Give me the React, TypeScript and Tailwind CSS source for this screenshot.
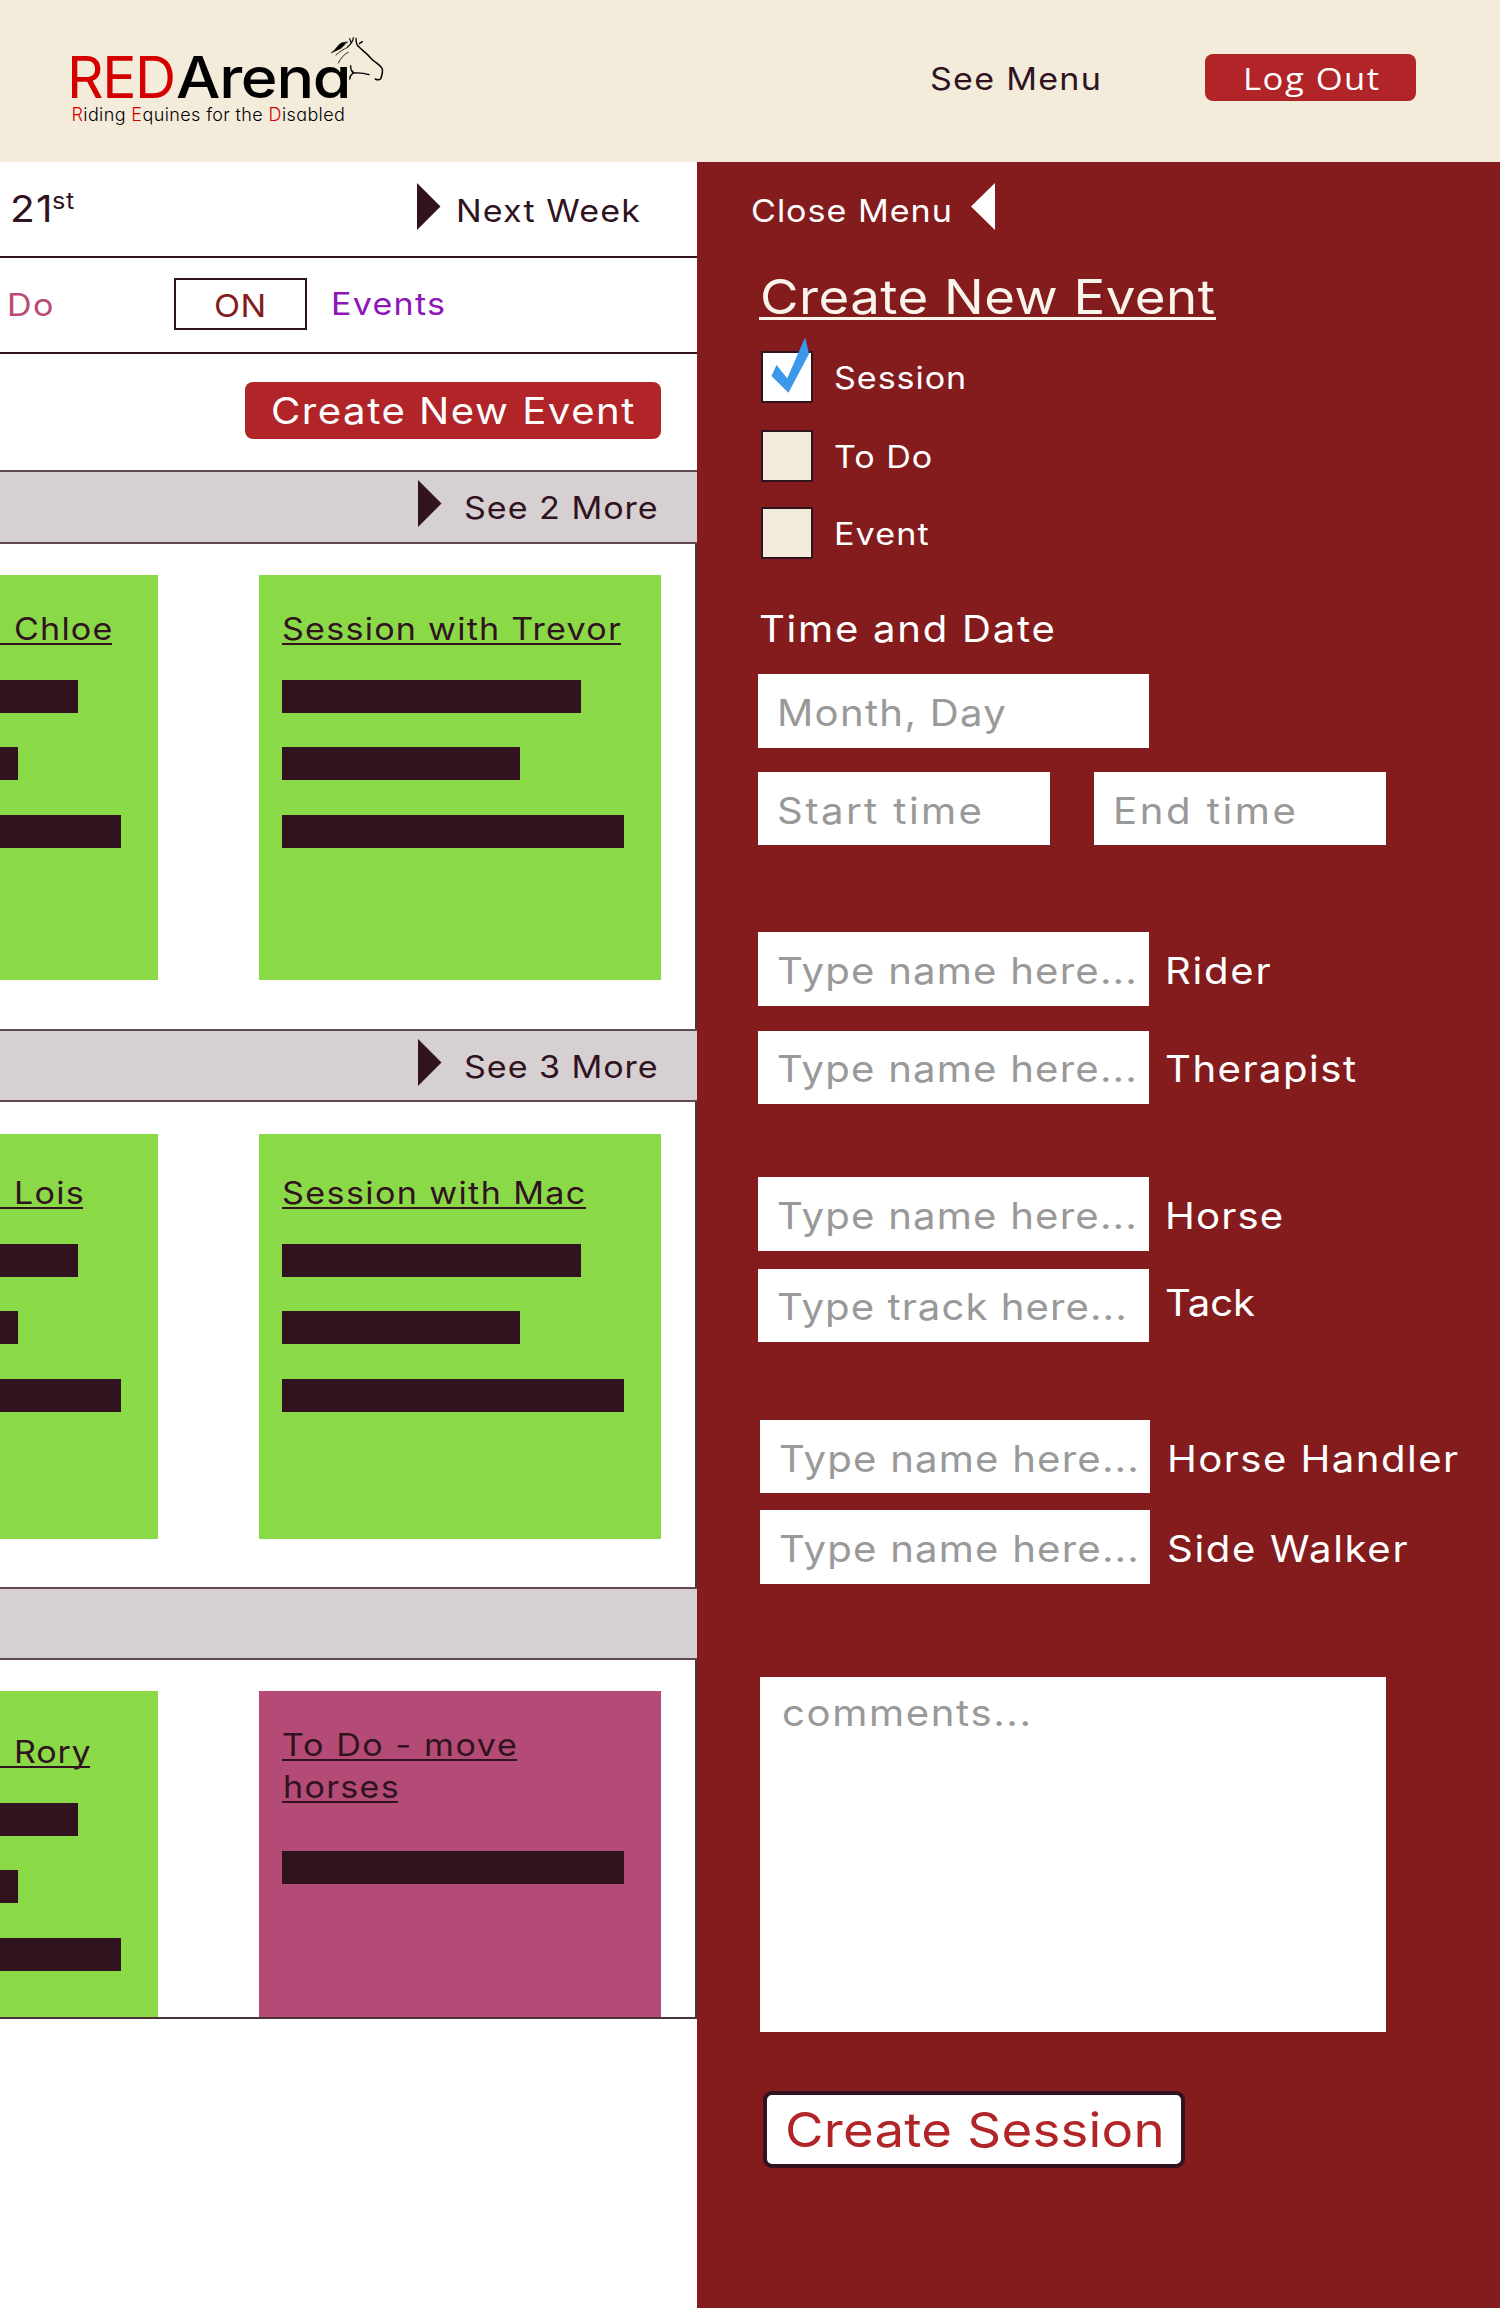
import type { ReactNode } from "react";

/* Slightly widened lettering used for every label in the interface. */
function T({ children, className = "" }: { children: ReactNode; className?: string }) {
  return <span className={`inline-block origin-left scale-x-110 ${className}`}>{children}</span>;
}

function RightArrow({ className }: { className: string }) {
  return (
    <svg viewBox="0 0 24 47" className={`h-[47px] w-6 shrink-0 fill-[#30131f] ${className}`}>
      <path d="M0 0 L23.5 23.5 L0 47 Z" />
    </svg>
  );
}

function Logo() {
  return (
    <div className="relative h-[162px] w-[930px] shrink-0 pl-[67px] pt-12 [font-feature-settings:'cv11']">
      <div className="flex text-[57px] leading-[60px]">
        <span className="w-[109px] tracking-[-1.47px] text-[#d40000]">RED</span>
        <T className="font-medium tracking-[-1.2px] text-black">Arena</T>
      </div>
      <div className="-mt-[3px] pl-[4.5px] text-[18px] font-light leading-5 tracking-[0.38px] text-black">
        <span className="text-[#d40000]">R</span>iding <span className="text-[#d40000]">E</span>quines for the{" "}
        <span className="text-[#d40000]">D</span>isabled
      </div>
      <svg
        viewBox="840 45 165 140"
        className="absolute left-[330px] top-[35px] h-[46.7px] w-[55px] fill-none stroke-black"
        strokeWidth="4"
        strokeLinecap="round"
        strokeLinejoin="round"
      >
        <path d="M845 98 C858 90 862 74 876 68 L893 66 C884 70 880 84 864 89 C858 91 852 96 845 98 Z" fill="black" strokeWidth="2" />
        <path d="M899 56 L903 68 M893 80 C902 74 908 66 910 53" strokeWidth="3.5" />
        <path d="M918 55 C918 66 919 75 925 79 M928 71 L937 65" />
        <path d="M925 79 C935 90 948 96 962 114 C973 127 990 133 997 147 C999 158 995 168 992 176 C988 180 982 180 976 177" strokeWidth="4.5" />
        <path d="M957 164 C945 160 925 158 912 159 L904 151 M902 137 C902 150 905 155 910 159 C902 165 899 170 899 177" />
        <path d="M895 97 C882 102 872 115 865 129 M893 82 C880 87 868 96 858 105" strokeWidth="2.5" />
      </svg>
    </div>
  );
}

function Title({ children, className, textClass }: { children: ReactNode; className: string; textClass: string }) {
  return (
    <div className={`h-9 shrink-0 border-b-2 border-[#30131f] leading-10 ${className}`}>
      <T className={textClass}>{children}</T>
    </div>
  );
}

function Bar({ className }: { className: string }) {
  return <div className={`h-[33px] shrink-0 bg-[#30131f] ${className}`} />;
}

type CardProps = { name: string; nameClass: string; textClass: string; className: string };

function ClippedCard({ name, nameClass, textClass, className }: CardProps) {
  return (
    <div className={`flex w-[158px] shrink-0 flex-col bg-[#8ada48] ${className}`}>
      <Title className={nameClass} textClass={textClass}>{name}</Title>
      <div className="mt-[34.5px] flex flex-col gap-[34.6px]">
        <Bar className="w-[78px]" />
        <Bar className="w-[18px]" />
        <Bar className="w-[121px]" />
      </div>
    </div>
  );
}

function SessionCard({ name, nameClass, textClass, className }: CardProps) {
  return (
    <div className={`ml-[101px] flex w-[402px] shrink-0 flex-col bg-[#8ada48] pl-[23px] ${className}`}>
      <Title className={nameClass} textClass={textClass}>{name}</Title>
      <div className="mt-[34.5px] flex flex-col gap-[34.6px]">
        <Bar className="w-[299px]" />
        <Bar className="w-[238px]" />
        <Bar className="w-[342px]" />
      </div>
    </div>
  );
}

function DayHeader({ more, className }: { more?: ReactNode; className: string }) {
  return (
    <div className={`flex w-[697px] shrink-0 items-start border-y-2 border-[#5f4852] bg-[#d6d0d2] ${className}`}>
      {more && (
        <>
          <RightArrow className="ml-[418px] mt-2" />
          <span className="ml-[22px] mt-4 leading-10">{more}</span>
        </>
      )}
    </div>
  );
}

function CheckRow({ label, labelClass, checked, className }: { label: string; labelClass: string; checked?: boolean; className: string }) {
  return (
    <div className={`relative ml-16 flex h-[52px] shrink-0 items-start ${className}`}>
      <div className={`h-[52px] w-[52px] border-2 border-[#30131f] ${checked ? "bg-white" : "bg-[#f3ecdb]"}`} />
      {checked && (
        <svg viewBox="0 0 38 56" className="absolute left-[10px] top-[-14px] h-14 w-[38px] fill-[#3d98eb]">
          <path d="M34.2 0.3 L38 17 L17.4 55.7 L0.5 39 L5.5 28 L16.2 41.3 Z" />
        </svg>
      )}
      <T className={`ml-[21px] mt-[6.5px] text-[31px] leading-10 ${labelClass}`}>{label}</T>
    </div>
  );
}

function Field({ text, className, textClass }: { text: string; className: string; textClass: string }) {
  return (
    <div className={`shrink-0 bg-white pl-[19px] leading-10 text-[#999999] ${className}`}>
      <T className={textClass}>{text}</T>
    </div>
  );
}

export default function App() {
  return (
    <div className="flex h-[2308px] w-[1500px] flex-col overflow-hidden whitespace-nowrap bg-white font-['Inter',sans-serif] text-[31px] text-[#30131f]">
      <header className="flex h-[162px] shrink-0 items-start bg-[#f3ecdb]">
        <Logo />
        <div className="mt-[59px] w-[275px] shrink-0 leading-10">
          <T className="tracking-[1.12px]">See Menu</T>
        </div>
        <button className="mt-[54px] flex h-[47px] w-[211px] shrink-0 items-start rounded-lg bg-[#b12427] pl-[37.5px] pt-[3.5px] text-left font-['Open_Sans',sans-serif] text-[31.5px] leading-10 text-white">
          <T className="tracking-[1.35px]">Log Out</T>
        </button>
      </header>

      <main className="flex grow">
        <section className="flex w-[697px] shrink-0 flex-col">
          <div className="flex h-24 shrink-0 items-start border-b-2 border-[#30131f]">
            <div className="mt-[27px] flex w-[416.5px] shrink-0 items-start pl-[10px]">
              <div className="w-[41.5px] text-[37px] leading-10">
                <T className="tracking-[1px]">21</T>
              </div>
              <T className="text-[23px] leading-6 tracking-[0.6px]">st</T>
            </div>
            <RightArrow className="mt-[21px]" />
            <T className="ml-[15px] mt-[28.5px] leading-10 tracking-[1px]">Next Week</T>
          </div>

          <div className="flex h-24 shrink-0 items-start border-b-2 border-[#30131f]">
            <div className="mt-[26.5px] w-[174px] shrink-0 pl-[7px] leading-10 text-[#b84c78]">
              <T className="tracking-[1.27px]">Do</T>
            </div>
            <div className="mt-5 h-[52px] w-[133px] shrink-0 border-2 border-[#30131f] pl-[38px] pt-[5.5px] leading-10 text-[#841b1d]">
              <T className="tracking-[0.39px]">ON</T>
            </div>
            <T className="ml-[23.5px] mt-[26px] leading-10 tracking-[1.13px] text-[#8e16b8]">Events</T>
          </div>

          <div className="flex h-[116px] shrink-0 items-start">
            <div className="ml-[244.5px] mt-7 h-[57px] w-[416.5px] rounded-lg bg-[#b12427] pl-[26.5px] pt-[9px] text-[36.5px] leading-10 text-white">
              <T className="tracking-[1.37px]">Create New Event</T>
            </div>
          </div>

          <div className="flex h-[559px] w-[697px] shrink-0 flex-col border-r-2 border-[#4c303b]">
            <DayHeader className="h-[74px]" more={<T className="tracking-[0.88px]">See 2 More</T>} />
            <div className="mt-[31px] flex">
              <ClippedCard name="Chloe" nameClass="w-28 pl-[13.5px]" textClass="tracking-[1.05px]" className="h-[405px] pt-[34px]" />
              <SessionCard name="Session with Trevor" nameClass="w-[339px]" textClass="tracking-[1.12px]" className="h-[405px] pt-[34px]" />
            </div>
          </div>

          <div className="flex h-[558px] w-[697px] shrink-0 flex-col border-r-2 border-[#4c303b]">
            <DayHeader className="h-[73px]" more={<T className="tracking-[0.85px]">See 3 More</T>} />
            <div className="mt-8 flex">
              <ClippedCard name="Lois" nameClass="w-[83px] pl-[14px]" textClass="tracking-[1.16px]" className="h-[405px] pt-[39px]" />
              <SessionCard name="Session with Mac" nameClass="w-[304px]" textClass="tracking-[1.25px]" className="h-[405px] pt-[39px]" />
            </div>
          </div>

          <div className="flex h-[432px] w-[697px] shrink-0 flex-col border-b-2 border-r-2 border-[#4c303b]">
            <DayHeader className="h-[73px]" />
            <div className="mt-[31px] flex">
              <ClippedCard name="Rory" nameClass="w-[90px] pl-[14px]" textClass="tracking-[0.7px]" className="h-[326px] pt-[41px]" />
              <div className="ml-[101px] flex h-[326px] w-[402px] shrink-0 flex-col bg-[#b44b76] pl-[23px] pt-[34px]">
                <Title className="w-[235px]" textClass="tracking-[1.44px]">To Do - move</Title>
                <Title className="mt-1.5 w-[116px] pl-[0.5px]" textClass="tracking-[1.16px]">horses</Title>
                <Bar className="mt-12 w-[342px]" />
              </div>
            </div>
          </div>
        </section>

        <aside className="flex w-[803px] shrink-0 flex-col bg-[#841b1d] text-[36.5px] text-white">
          <div className="flex h-[107px] shrink-0 items-start pl-[54px] text-[31px]">
            <div className="mt-[28.5px] w-[220px] leading-10">
              <T className="tracking-[0.88px]">Close Menu</T>
            </div>
            <svg viewBox="0 0 24 47" className="mt-[21px] h-[47px] w-6 fill-white">
              <path d="M24 0 L0 23.5 L24 47 Z" />
            </svg>
          </div>

          <h1 className="ml-[61.5px] h-[51px] w-[457px] shrink-0 border-b-[3px] border-[#f9f5ec] pl-[1px] text-[48px] leading-[56px] text-[#f9f5ec]">
            <T className="tracking-[0.41px]">Create New Event</T>
          </h1>

          <CheckRow label="Session" labelClass="tracking-[0.85px]" checked className="mt-[31px]" />
          <CheckRow label="To Do" labelClass="tracking-[0.84px]" className="mt-[27px]" />
          <CheckRow label="Event" labelClass="tracking-[1.02px]" className="mt-[25px]" />

          <h2 className="mt-[50px] h-10 shrink-0 pl-[62px] leading-10">
            <T className="tracking-[1.55px]">Time and Date</T>
          </h2>
          <Field text="Month, Day" textClass="tracking-[1.17px]" className="ml-[61px] mt-[25px] h-[74px] w-[391px] pt-[19px]" />
          <div className="ml-[61px] mt-6 flex shrink-0 gap-11">
            <Field text="Start time" textClass="tracking-[2.2px]" className="h-[73px] w-[292px] pt-[18.5px]" />
            <Field text="End time" textClass="tracking-[2.3px]" className="h-[73px] w-[292px] pt-[18.5px]" />
          </div>

          <div className="ml-[61px] mt-[87px] flex shrink-0">
            <Field text="Type name here..." textClass="tracking-[1.07px]" className="h-[74px] w-[391px] pt-[19px]" />
            <T className="ml-4 mt-[19px] leading-10 tracking-[1.56px]">Rider</T>
          </div>
          <div className="ml-[61px] mt-[25px] flex shrink-0">
            <Field text="Type name here..." textClass="tracking-[1.07px]" className="h-[73px] w-[391px] pt-[18px]" />
            <T className="ml-4 mt-[18px] leading-10 tracking-[1.33px]">Therapist</T>
          </div>

          <div className="ml-[61px] mt-[73px] flex shrink-0">
            <Field text="Type name here..." textClass="tracking-[1.07px]" className="h-[74px] w-[391px] pt-[19px]" />
            <T className="ml-4 mt-[19px] leading-10 tracking-[1.02px]">Horse</T>
          </div>
          <div className="ml-[61px] mt-[18px] flex shrink-0">
            <Field text="Type track here..." textClass="tracking-[0.95px]" className="h-[73px] w-[391px] pt-[18px]" />
            <T className="ml-4 mt-[14px] leading-10 tracking-[-0.11px]">Tack</T>
          </div>

          <div className="ml-[62.5px] mt-[78px] flex shrink-0">
            <Field text="Type name here..." textClass="tracking-[1.07px]" className="h-[73px] w-[390.5px] pt-[18.5px]" />
            <T className="ml-[17px] mt-[18.5px] leading-10 tracking-[1.31px]">Horse Handler</T>
          </div>
          <div className="ml-[62.5px] mt-[17px] flex shrink-0">
            <Field text="Type name here..." textClass="tracking-[1.07px]" className="h-[74px] w-[390.5px] pt-[19px]" />
            <T className="ml-[16.5px] mt-[19px] leading-10 tracking-[1.48px]">Side Walker</T>
          </div>

          <div className="ml-[62.5px] mt-[92.5px] h-[355px] w-[626.5px] shrink-0 bg-white pl-[22px] pt-4 leading-10 text-[#999999]">
            <T className="tracking-[1.45px]">comments...</T>
          </div>

          <div className="ml-[66px] mt-[59.5px] h-[77px] w-[422px] shrink-0 rounded-[9px] border-4 border-[#30131f] bg-white pl-[17.5px] pt-[6.5px] text-[48px] leading-[56px] text-[#b12427]">
            <T className="tracking-[0.19px]">Create Session</T>
          </div>
        </aside>
      </main>
    </div>
  );
}
